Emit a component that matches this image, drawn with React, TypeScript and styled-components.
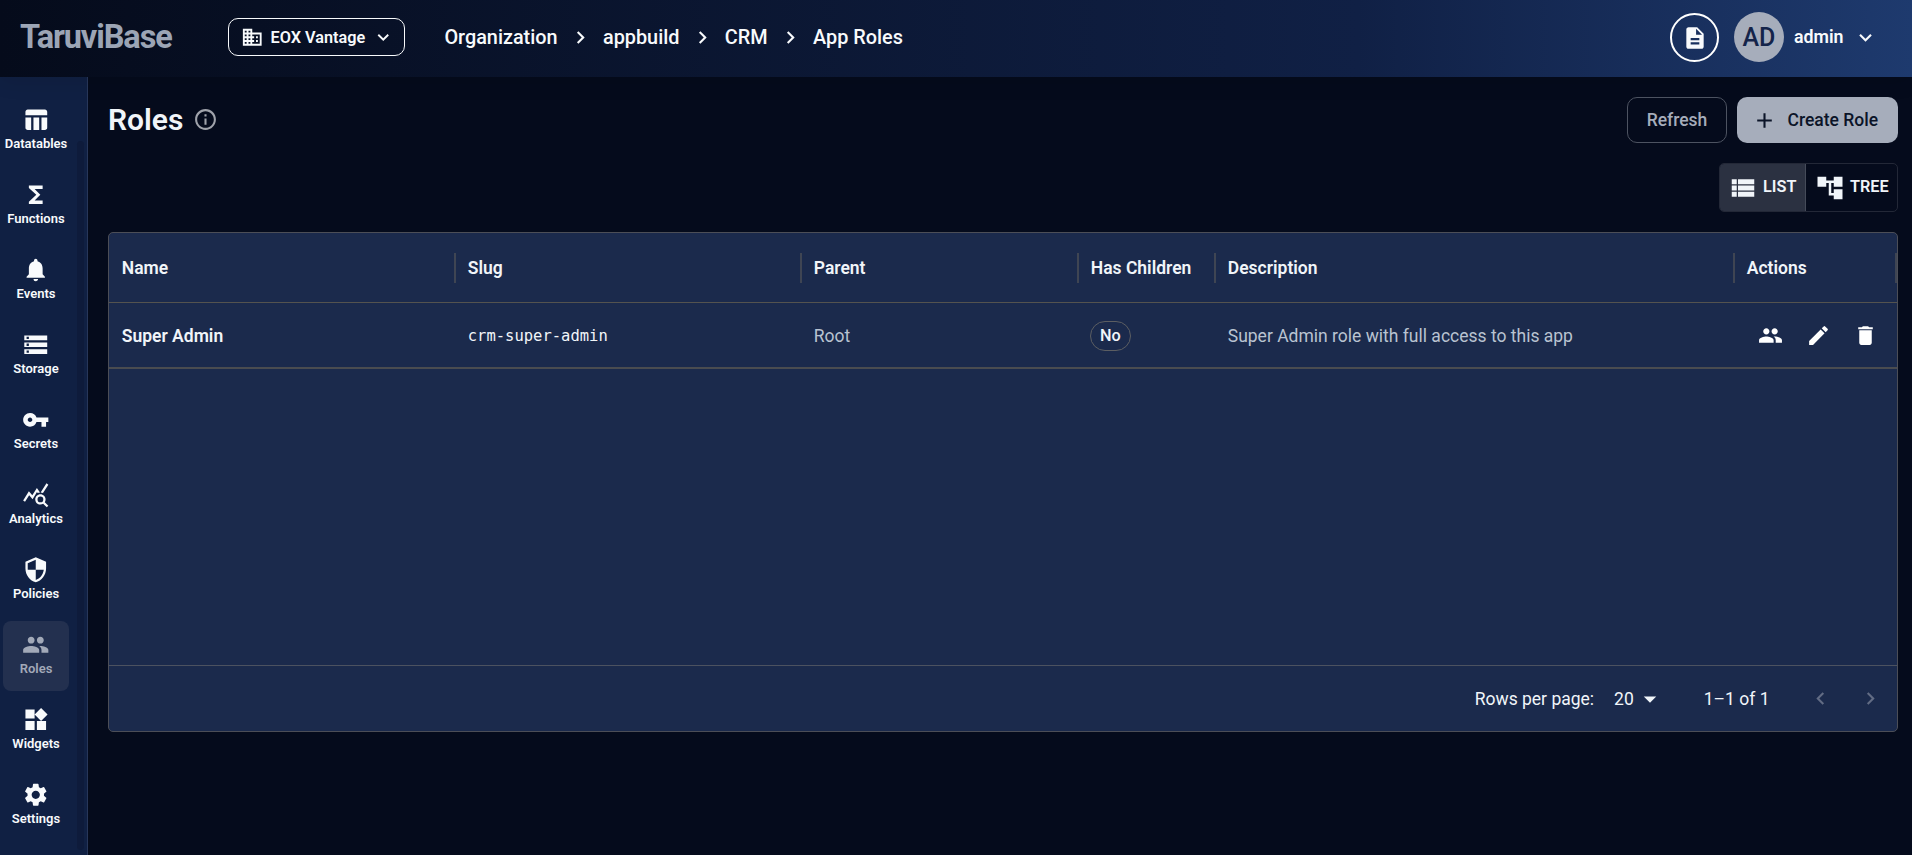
import React from "react";
import styled, { createGlobalStyle } from "styled-components";
import type { IconType } from "react-icons";
import {
  MdAccountTree,
  MdAdd,
  MdArrowDropDown,
  MdBusiness,
  MdChevronLeft,
  MdChevronRight,
  MdDelete,
  MdDescription,
  MdEdit,
  MdFunctions,
  MdInfoOutline,
  MdKeyboardArrowDown,
  MdNotifications,
  MdPeople,
  MdQueryStats,
  MdSecurity,
  MdSettings,
  MdStorage,
  MdTableChart,
  MdViewList,
  MdVpnKey,
  MdWidgets,
} from "react-icons/md";

const GlobalStyle = createGlobalStyle`
  * { box-sizing: border-box; }
  body {
    margin: 0;
    background: #050b1c;
    color: #f1f5f9;
    font-family: Roboto, "Liberation Sans", sans-serif;
    font-size: 17.5px;
    overflow: hidden;
  }
  button { font-family: inherit; color: inherit; background: none; border: 0; padding: 0; margin: 0; }
  svg { display: block; flex: none; }
`;

const Page = styled.div`
  display: flex;
  flex-direction: column;
  height: 855px;
`;

const Header = styled.header`
  display: flex;
  align-items: center;
  height: 77px;
  flex: none;
  padding: 0 34px 3px 20px;
  background: linear-gradient(90deg, #050b1b 0%, #102045 71%, #1e3a6e 100%);
  box-shadow: 0 4px 20px rgba(0, 0, 0, 0.1);
  position: relative;
  color: #f8fafc;
`;

const Logo = styled.div`
  width: 208px;
  font-size: 32.5px;
  font-weight: 700;
  letter-spacing: -1.1px;
  color: #9ca5b5;
`;

const OrgButton = styled.button`
  display: flex;
  align-items: center;
  width: 177px;
  height: 38px;
  padding-left: 12px;
  border: 1px solid #f8fafc;
  border-radius: 10px;
  font-size: 16.25px;
  font-weight: 600;
`;

const OrgName = styled.span`
  width: 101px;
  margin-left: 7px;
  text-align: left;
  white-space: nowrap;
`;

const Crumbs = styled.nav`
  display: flex;
  align-items: center;
  gap: 10.2px;
  margin-left: 39.4px;
  font-size: 19.85px;
  font-weight: 500;
  white-space: nowrap;
`;

const HeaderEnd = styled.div`
  display: flex;
  align-items: center;
  margin-left: auto;
`;

const DocsButton = styled.button`
  display: grid;
  place-items: center;
  width: 49px;
  height: 49px;
  margin-top: 1px;
  border: 2px solid #fff;
  border-radius: 50%;
`;

const Avatar = styled.div`
  display: grid;
  place-items: center;
  width: 50px;
  height: 50px;
  margin: 0 10px 0 15px;
  border-radius: 50%;
  background: #a6adbb;
  color: #14244a;
  font-size: 25px;
  font-weight: 500;
`;

const UserName = styled.span`
  width: 59px;
  font-size: 17.75px;
  font-weight: 600;
`;

const Body = styled.div`
  display: flex;
  flex: 1;
  min-height: 0;
`;

const Sidebar = styled.aside`
  display: flex;
  justify-content: space-between;
  width: 88px;
  flex: none;
  padding: 19px 3px 5px;
  border-right: 1px solid #28375a;
  background: #102043;
`;

const NavList = styled.nav`
  display: flex;
  flex-direction: column;
  gap: 5px;
`;

const NavItem = styled.a<{ $active?: boolean }>`
  display: flex;
  flex-direction: column;
  align-items: center;
  width: 66px;
  height: 70px;
  padding-top: 10px;
  border-radius: 8px;
  background: ${(p) => (p.$active ? "#23304f" : "transparent")};
  color: ${(p) => (p.$active ? "#a2a9b8" : "#f8fafc")};
  font-size: 13px;
  font-weight: 600;
  line-height: 20px;
`;

const ScrollTrack = styled.div`
  width: 7px;
  margin-top: 45px;
  border-radius: 4px;
  background: #0e1b3b;
`;

const Main = styled.main`
  flex: 1;
  display: flex;
  flex-direction: column;
  padding: 20px 14px 0 20px;
`;

const TitleRow = styled.div`
  display: flex;
  align-items: flex-start;
  height: 46px;
`;

const TitleGroup = styled.div`
  display: flex;
  align-items: center;
  gap: 10px;
  height: 44px;
`;

const Title = styled.h1`
  margin: 0;
  padding-top: 1px;
  font-size: 30px;
  font-weight: 600;
  line-height: 44px;
`;

const TitleActions = styled.div`
  display: flex;
  gap: 10px;
  margin-left: auto;
`;

const Button = styled.button<{ $filled?: boolean }>`
  display: flex;
  align-items: center;
  justify-content: center;
  gap: 10.5px;
  width: ${(p) => (p.$filled ? "161px" : "100px")};
  height: 46px;
  padding-right: ${(p) => (p.$filled ? "5px" : "0")};
  border: ${(p) => (p.$filled ? "0" : "1px solid #4d5361")};
  border-radius: 10px;
  background: ${(p) => (p.$filled ? "#a6adbb" : "transparent")};
  color: ${(p) => (p.$filled ? "#0b1428" : "#a6adbb")};
  font-size: 17.5px;
  font-weight: 500;
`;

const Toggle = styled.div`
  display: flex;
  align-self: flex-end;
  width: 179px;
  height: 49px;
  margin: 20px 0;
  border: 1px solid #232837;
  border-radius: 5px;
  overflow: hidden;
`;

const ToggleOption = styled.button<{ $selected?: boolean }>`
  display: flex;
  align-items: center;
  width: ${(p) => (p.$selected ? "86px" : "91px")};
  padding: 0 0 0 ${(p) => (p.$selected ? "8px" : "9px")};
  gap: 5px;
  background: ${(p) => (p.$selected ? "#2b3141" : "transparent")};
  border-right: ${(p) => (p.$selected ? "1px solid #454b59" : "0")};
  font-size: 16.25px;
  font-weight: 600;
`;

const ToggleLabel = styled.span`
  padding-bottom: 2px;
`;

const Grid = styled.section`
  display: flex;
  flex-direction: column;
  height: 500px;
  border: 1px solid #4c4e57;
  border-radius: 5px;
  background: #1b2a4c;
`;

const GridLine = styled.div<{ $height: number; $head?: boolean }>`
  display: grid;
  grid-template-columns: 346px 346px 277px 137px 519px 1fr;
  height: ${(p) => p.$height}px;
  padding-top: ${(p) => (p.$head ? "0" : "1px")};
  border-bottom: ${(p) => (p.$head ? "1px solid #54534f" : "2px solid #4a4c50")};
  font-weight: ${(p) => (p.$head ? 600 : 400)};
`;

const Cell = styled.div`
  display: flex;
  align-items: center;
  padding-left: 12.75px;
  white-space: nowrap;
`;

const HeadCell = styled(Cell)`
  justify-content: space-between;
  &::after {
    content: "";
    width: 2px;
    height: 30px;
    margin-right: -1px;
    background: #3f4553;
  }
  &:last-child::after { margin-right: 0; }
`;

const NameText = styled.span`
  font-weight: 600;
`;

const SlugText = styled.code`
  font-family: "DejaVu Sans Mono", monospace;
  font-size: 15.5px;
`;

const MutedText = styled.span`
  color: #b9c3d1;
`;

const Chip = styled.span`
  display: grid;
  place-items: center;
  width: 41px;
  height: 30px;
  margin-left: -1px;
  border: 1px solid #5c5e62;
  border-radius: 15px;
  font-size: 16.25px;
  font-weight: 500;
`;

const ActionCell = styled.div`
  display: flex;
  align-items: center;
  gap: 22.6px;
  padding-left: 24px;
  color: #fff;
`;

const GridFooter = styled.footer`
  display: flex;
  align-items: center;
  justify-content: flex-end;
  height: 66px;
  margin-top: auto;
  padding-right: 14px;
  border-top: 1px solid #4c5260;
`;

const PageSize = styled.div`
  display: flex;
  align-items: center;
  gap: 1px;
  margin: 0 39px 0 20px;
`;

const Pager = styled.div`
  display: flex;
  gap: 25px;
  margin-left: 38.5px;
  color: #626c84;
`;

const navItems: { label: string; icon: IconType; active?: boolean }[] = [
  { label: "Datatables", icon: MdTableChart },
  { label: "Functions", icon: MdFunctions },
  { label: "Events", icon: MdNotifications },
  { label: "Storage", icon: MdStorage },
  { label: "Secrets", icon: MdVpnKey },
  { label: "Analytics", icon: MdQueryStats },
  { label: "Policies", icon: MdSecurity },
  { label: "Roles", icon: MdPeople, active: true },
  { label: "Widgets", icon: MdWidgets },
  { label: "Settings", icon: MdSettings },
];

const crumbs = ["Organization", "appbuild", "CRM", "App Roles"];
const columns = ["Name", "Slug", "Parent", "Has Children", "Description", "Actions"];

export default function App() {
  return (
    <Page>
      <GlobalStyle />
      <Header>
        <Logo>TaruviBase</Logo>
        <OrgButton>
          <MdBusiness size={22.5} />
          <OrgName>EOX Vantage</OrgName>
          <MdKeyboardArrowDown size={22.5} />
        </OrgButton>
        <Crumbs>
          {crumbs.map((crumb, i) => (
            <React.Fragment key={crumb}>
              {i > 0 && <MdChevronRight size={25} />}
              <span>{crumb}</span>
            </React.Fragment>
          ))}
        </Crumbs>
        <HeaderEnd>
          <DocsButton>
            <MdDescription size={26} />
          </DocsButton>
          <Avatar>AD</Avatar>
          <UserName>admin</UserName>
          <MdKeyboardArrowDown size={25} />
        </HeaderEnd>
      </Header>
      <Body>
        <Sidebar>
          <NavList>
            {navItems.map(({ label, icon: Icon, active }) => (
              <NavItem key={label} $active={active}>
                <Icon size={27.5} />
                {label}
              </NavItem>
            ))}
          </NavList>
          <ScrollTrack />
        </Sidebar>
        <Main>
          <TitleRow>
            <TitleGroup>
              <Title>Roles</Title>
              <MdInfoOutline size={25} color="#a0a3ab" />
            </TitleGroup>
            <TitleActions>
              <Button>Refresh</Button>
              <Button $filled>
                <MdAdd size={25} />
                Create Role
              </Button>
            </TitleActions>
          </TitleRow>
          <Toggle>
            <ToggleOption $selected>
              <MdViewList size={30} />
              <ToggleLabel>LIST</ToggleLabel>
            </ToggleOption>
            <ToggleOption>
              <MdAccountTree size={30} />
              <ToggleLabel>TREE</ToggleLabel>
            </ToggleOption>
          </Toggle>
          <Grid>
            <GridLine $height={70} $head>
              {columns.map((column) => (
                <HeadCell key={column}>{column}</HeadCell>
              ))}
            </GridLine>
            <GridLine $height={66}>
              <Cell>
                <NameText>Super Admin</NameText>
              </Cell>
              <Cell>
                <SlugText>crm-super-admin</SlugText>
              </Cell>
              <Cell>
                <MutedText>Root</MutedText>
              </Cell>
              <Cell>
                <Chip>No</Chip>
              </Cell>
              <Cell>
                <MutedText>Super Admin role with full access to this app</MutedText>
              </Cell>
              <ActionCell>
                <MdPeople size={25} />
                <MdEdit size={25} />
                <MdDelete size={25} />
              </ActionCell>
            </GridLine>
            <GridFooter>
              <span>Rows per page:</span>
              <PageSize>
                20
                <MdArrowDropDown size={30} />
              </PageSize>
              <span>1–1 of 1</span>
              <Pager>
                <MdChevronLeft size={25} />
                <MdChevronRight size={25} />
              </Pager>
            </GridFooter>
          </Grid>
        </Main>
      </Body>
    </Page>
  );
}
